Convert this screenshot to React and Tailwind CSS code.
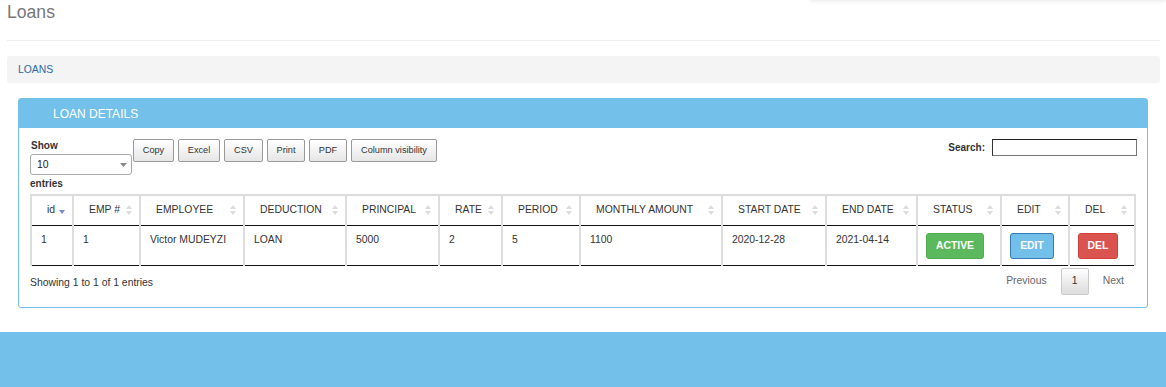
import React from 'react'

const columns = [
  { label: 'id', w: 'w-[42px]', sorted: true },
  { label: 'EMP #', w: 'w-[67px]' },
  { label: 'EMPLOYEE', w: 'w-[104px]' },
  { label: 'DEDUCTION', w: 'w-[102px]' },
  { label: 'PRINCIPAL', w: 'w-[93px]' },
  { label: 'RATE', w: 'w-[63px]' },
  { label: 'PERIOD', w: 'w-[78px]' },
  { label: 'MONTHLY AMOUNT', w: 'w-[142px]' },
  { label: 'START DATE', w: 'w-[104px]' },
  { label: 'END DATE', w: 'w-[91px]' },
  { label: 'STATUS', w: 'w-[84px]' },
  { label: 'EDIT', w: 'w-[68px]' },
  { label: 'DEL', w: 'w-[66px]' },
]

const row = ['1', '1', 'Victor MUDEYZI', 'LOAN', '5000', '2', '5', '1100', '2020-12-28', '2021-04-14']

const exportButtons = [
  { label: 'Copy', w: 'w-[41px]' },
  { label: 'Excel', w: 'w-[42px]' },
  { label: 'CSV', w: 'w-[39px]' },
  { label: 'Print', w: 'w-[38px]' },
  { label: 'PDF', w: 'w-[38px]' },
  { label: 'Column visibility', w: 'w-[86px]' },
]

function SortIcon({ active }) {
  if (active) {
    return (
      <svg width="6" height="10" viewBox="0 0 6 10" className="shrink-0">
        <path d="M0 5 L6 5 L3 9 Z" fill="#7b86d4" />
      </svg>
    )
  }
  return (
    <svg width="6" height="10" viewBox="0 0 6 10" className="shrink-0">
      <path d="M0 4 L6 4 L3 0 Z" fill="#dcdcdc" />
      <path d="M0 6 L6 6 L3 10 Z" fill="#dcdcdc" />
    </svg>
  )
}

function App() {
  return (
    <div className="relative flex flex-col min-h-[387px] bg-white font-['Liberation_Sans',Arial,sans-serif] text-[#333] overflow-hidden">
      <div className="absolute top-[-8px] left-[810px] right-0 h-[8px] bg-white shadow-[0_1px_4px_rgba(0,0,0,0.1)]" />

      <div className="pl-[7px] pr-[6px]">
        <h1 className="pt-[2px] text-[17.6px] leading-[20px] text-[#777]">Loans</h1>
        <hr className="mt-[18px] border-t border-[#eee]" />
        <div className="mt-[15px] h-[27px] rounded-[3px] bg-[#f4f4f4] flex items-center pl-[11px]">
          <a href="#" className="text-[10.4px] text-[#2a6aa8]">LOANS</a>
        </div>
      </div>

      <div className="mt-[15px] ml-[18px] mr-[18px] border border-[#73c0ea] rounded-[3px]">
        <div className="h-[29px] bg-[#73c0ea] flex items-center pl-[34px] text-white text-[12px]">LOAN DETAILS</div>

        <div className="pl-[11px] pr-[10px] pt-[11px] pb-[12px]">
          <div className="flex justify-between items-start">
            <div className="flex items-start">
              <div className="w-[103px] text-[10px] font-bold leading-[13px]">
                <div className="pl-[1px]">Show</div>
                <div className="mt-[2px] h-[21px] w-[102px] border border-[#aaa] rounded-[3px] bg-white flex items-center justify-between pl-[6px] pr-[4px]">
                  <span className="text-[10.4px] font-normal text-[#222]">10</span>
                  <svg width="7" height="4" viewBox="0 0 7 4"><path d="M0 0 L7 0 L3.5 4 Z" fill="#888" /></svg>
                </div>
                <div className="mt-[2px]">entries</div>
              </div>
              <div className="flex gap-[4px]">
                {exportButtons.map(b => (
                  <button key={b.label} className={`${b.w} h-[23px] border border-[#999] rounded-[2px] bg-gradient-to-b from-white to-[#e6e6e6] text-[9.2px] text-[#333] flex items-center justify-center whitespace-nowrap`}>
                    {b.label}
                  </button>
                ))}
              </div>
            </div>
            <div className="flex items-center gap-[7px]">
              <span className="text-[10px] font-bold">Search:</span>
              <input type="search" className="w-[145px] h-[17px] border border-[#767676] border-t-[#222] border-l-[#333] bg-white outline-none" />
            </div>
          </div>

          <table className="mt-[4px] w-[1104px] table-fixed border-collapse text-[10.4px]">
            <colgroup>
              {columns.map(c => <col key={c.label} className={c.w} />)}
            </colgroup>
            <thead>
              <tr className="border-t-2 border-[#ddd]">
                {columns.map(c => (
                  <th key={c.label} className="h-[30px] border-x-2 border-[#ddd] border-b border-b-[#111] pl-[15px] pr-[7px] font-normal text-left align-middle">
                    <div className="flex items-center justify-between">
                      <span>{c.label}</span>
                      <SortIcon active={c.sorted} />
                    </div>
                  </th>
                ))}
              </tr>
            </thead>
            <tbody>
              <tr className="border-b border-[#111]">
                {row.map((v, i) => (
                  <td key={i} className="h-[40px] border-x-2 border-[#ddd] pl-[9px] pt-[7px] align-top leading-[14px]">{v}</td>
                ))}
                <td className="h-[40px] border-x-2 border-[#ddd] pl-[8px] pt-[7px] align-top">
                  <span className="inline-flex items-center justify-center w-[58px] h-[26px] rounded-[3px] bg-[#5cb85c] border border-[#4cae4c] text-white font-bold text-[10.4px]">ACTIVE</span>
                </td>
                <td className="h-[40px] border-x-2 border-[#ddd] pl-[8px] pt-[7px] align-top">
                  <span className="inline-flex items-center justify-center w-[44px] h-[26px] rounded-[3px] bg-[#72bfea] border border-[#3679b8] text-white font-bold text-[10.4px]">EDIT</span>
                </td>
                <td className="h-[40px] border-x-2 border-[#ddd] pl-[8px] pt-[7px] align-top">
                  <span className="inline-flex items-center justify-center w-[40px] h-[26px] rounded-[3px] bg-[#d9534f] border border-[#d43f3a] text-white font-bold text-[10.4px]">DEL</span>
                </td>
              </tr>
            </tbody>
          </table>

          <div className="flex justify-between items-start w-[1104px] mt-[2px]">
            <div className="pt-[8px] text-[10.4px] leading-[14px]">Showing 1 to 1 of 1 entries</div>
            <div className="flex items-center text-[10.4px] text-[#666] pr-[10px]">
              <span>Previous</span>
              <span className="ml-[14px] mr-[14px] w-[28px] h-[27px] border border-[#cacaca] rounded-[2px] bg-gradient-to-b from-white to-[#dcdcdc] flex items-center justify-center text-[#333]">1</span>
              <span>Next</span>
            </div>
          </div>
        </div>
      </div>

      <div className="mt-[24px] flex-1 min-h-[56px] bg-[#73c0ea]" />
    </div>
  )
}

export default App
